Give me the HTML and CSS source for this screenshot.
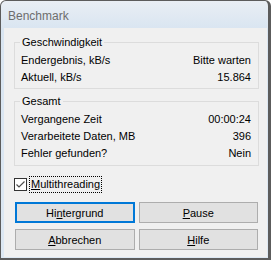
FILE: index.html
```html
<!DOCTYPE html>
<html lang="de">
<head>
    <meta charset="UTF-8">
    <title>Benchmark</title>
    <link rel="stylesheet" href="styles.css">
</head>
<body>
    <div class="window">
        <div class="titlebar">Benchmark</div>
        <div class="client">
            <div class="group">
                <div class="legend">Geschwindigkeit</div>
                <div class="row"><span>Endergebnis, kB/s</span><span>Bitte warten</span></div>
                <div class="row"><span>Aktuell, kB/s</span><span>15.864</span></div>
            </div>

            <div class="group second">
                <div class="legend">Gesamt</div>
                <div class="row"><span>Vergangene Zeit</span><span>00:00:24</span></div>
                <div class="row"><span>Verarbeitete Daten, MB</span><span>396</span></div>
                <div class="row"><span>Fehler gefunden?</span><span>Nein</span></div>
            </div>

            <label class="check">
                <span class="box">
                    <svg width="11" height="11" viewBox="0 0 11 11">
                        <path d="M1.5 5.5 L4 8 L9.5 2.5" fill="none" stroke="#4d4d4d" stroke-width="1.2"/>
                    </svg>
                </span>
                <span class="focus"><u>M</u>ultithreading</span>
            </label>

            <div class="buttons">
                <button class="btn default">Hi<u>n</u>tergrund</button>
                <button class="btn"><u>P</u>ause</button>
                <button class="btn"><u>A</u>bbrechen</button>
                <button class="btn"><u>H</u>ilfe</button>
            </div>
        </div>
    </div>
</body>
</html>
```

FILE: styles.css
```css
body {
    margin: 0;
    background: #ffffff;
    font-family: "Liberation Sans", Arial, sans-serif;
    font-size: 11px;
    line-height: 13px;
    color: #000;
}

.window {
    width: 271px;
    height: 260px;
    box-sizing: border-box;
    border: 1px solid #5c5c5c;
    border-right-width: 3px;
    border-bottom-width: 2px;
    border-radius: 6px 6px 0 0;
    background: linear-gradient(#e9eef4 0px, #d9e5f1 28px, #dde8f3 100%);
    display: flex;
    flex-direction: column;
    overflow: hidden;
}

.titlebar {
    height: 27px;
    line-height: 30px;
    padding-left: 7px;
    font-size: 12px;
    color: #6d6d6d;
}

.client {
    flex: 1;
    margin: 0 1px 1px 3px;
    padding: 14px 8px 0 10px;
    background: #f0f0f0;
}

.group {
    border: 1px solid #dcdcdc;
    padding: 0 7px 2px 6px;
}

.group.second {
    margin-top: 12px;
    padding-bottom: 3px;
}

.legend {
    width: fit-content;
    height: 16px;
    line-height: 16px;
    margin: -9px 0 2px -1px;
    padding: 0 2px;
    background: #f0f0f0;
}

.row {
    display: flex;
    justify-content: space-between;
    height: 17px;
    line-height: 17px;
}

.check {
    display: flex;
    align-items: center;
    gap: 2px;
    margin-top: 10px;
    height: 17px;
}

.box {
    width: 11px;
    height: 11px;
    border: 1px solid #333;
    background: #fff;
    display: flex;
}

.focus {
    border: 1px dotted #000;
    height: 15px;
    line-height: 15px;
    padding: 0 1px;
}

.buttons {
    display: grid;
    grid-template-columns: 1fr 1fr;
    gap: 6px 4px;
    margin: 9px 1px 0 1px;
}

.btn {
    height: 21px;
    border: 1px solid #adadad;
    background: #e1e1e1;
    font-family: inherit;
    font-size: 11px;
    color: #000;
    padding: 0;
}

.btn.default {
    border: 2px solid #0078d7;
}
```
